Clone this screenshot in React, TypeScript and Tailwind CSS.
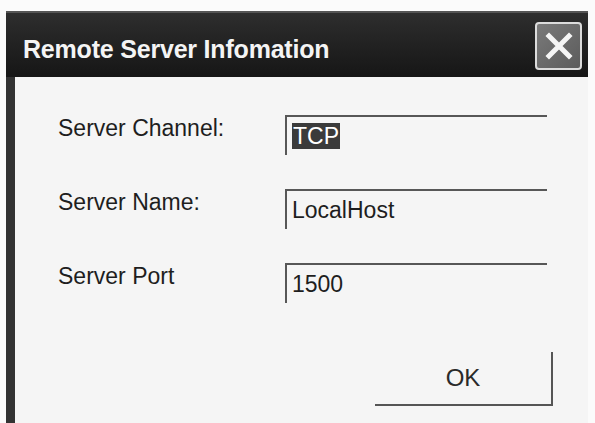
import { useState } from 'react'

const font = { fontFamily: '"Liberation Sans", Arial, sans-serif' }

function Field({ label, value, selected }: { label: string; value: string; selected?: boolean }) {
  return (
    <div className="flex items-start">
      <div className="w-[227px] pt-0 text-[23px] leading-[26px] text-[#1e1e1e]">{label}</div>
      <div className="h-[40px] w-[262px] border-t-2 border-l-2 border-[#575757] pl-[5px] pt-[6px] text-[23px] leading-[26px] text-[#1e1e1e]">
        {selected ? <span className="bg-[#3b3b3b] px-[1px] text-white">{value}</span> : value}
      </div>
    </div>
  )
}

export default function App() {
  const [port] = useState('1500')

  return (
    <div className="h-[423px] w-[595px] overflow-hidden bg-[#fbfbfb] pt-[11px] pr-[7px] pl-[6px]" style={font}>
      <div className="flex h-full flex-col">
        {/* Title bar */}
        <div className="flex h-[66px] items-start justify-between border-t-2 border-[#555] bg-gradient-to-b from-[#2e2e2e] to-[#161616] pt-[0px] pr-[6px] pl-[17px]">
          <span className="pt-[22px] text-[25px] leading-[28px] font-bold tracking-[-0.2px] text-[#f4f4f4]">
            Remote Server Infomation
          </span>
          <button className="mt-[9px] flex h-[48px] w-[47px] items-center justify-center rounded-[4px] border-2 border-[#dcdcdc] bg-gradient-to-br from-[#7a7a7a] to-[#5c5c5c]">
            <svg width="30" height="30" viewBox="0 0 30 30">
              <path d="M5 5 L25 25 M25 5 L5 25" stroke="#f5f5f5" strokeWidth="5" strokeLinecap="square" />
            </svg>
          </button>
        </div>

        {/* Body */}
        <div className="flex flex-1">
          <div className="w-[9px] bg-[#333]" />
          <div className="flex flex-1 flex-col bg-[#f5f5f5] pt-[38px] pl-[43px]">
            <div className="flex flex-col gap-[34px]">
              <Field label="Server Channel:" value="TCP" selected />
              <Field label="Server Name:" value="LocalHost" />
              <Field label="Server Port" value={port} />
            </div>
            <div className="mt-[49px] flex justify-end pr-[35px]">
              <button className="h-[54px] w-[178px] border-r-2 border-b-2 border-[#555] text-[24px] leading-[28px] text-[#2a2a2a]">
                OK
              </button>
            </div>
          </div>
        </div>
      </div>
    </div>
  )
}
